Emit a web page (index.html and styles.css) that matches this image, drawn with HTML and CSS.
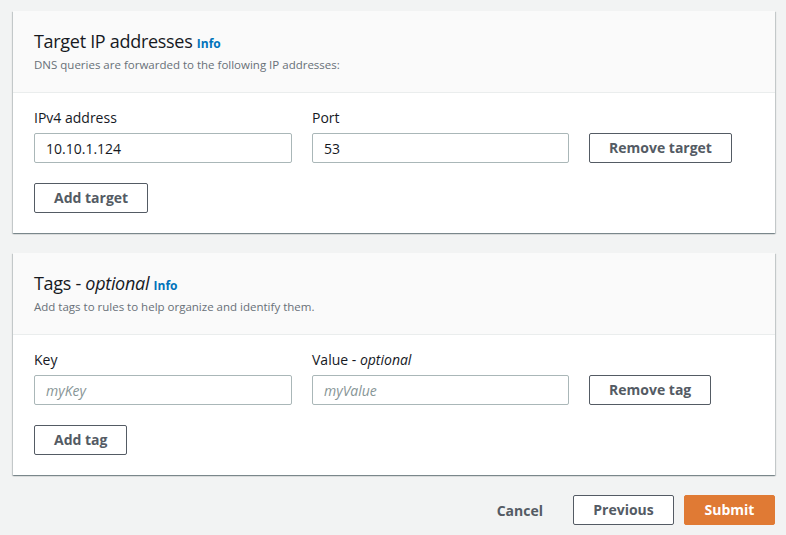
FILE: index.html
```html
<!DOCTYPE html>
<html>
<head>
<meta charset="utf-8">
<link rel="stylesheet" href="styles.css">
</head>
<body>
<div class="page">
  <section class="card">
    <div class="card-header">
      <h2 class="title">Target IP addresses <a class="info">Info</a></h2>
      <p class="desc">DNS queries are forwarded to the following IP addresses:</p>
    </div>
    <div class="card-body">
      <div class="row row-target">
        <div class="field">
          <label class="label">IPv4 address</label>
          <input class="input" type="text" value="10.10.1.124">
        </div>
        <div class="field">
          <label class="label">Port</label>
          <input class="input" type="text" value="53">
        </div>
        <div class="field-btn">
          <button class="btn">Remove target</button>
        </div>
      </div>
      <div class="add-row"><button class="btn">Add target</button></div>
    </div>
  </section>

  <section class="card">
    <div class="card-header">
      <h2 class="title">Tags - <i>optional</i> <a class="info">Info</a></h2>
      <p class="desc">Add tags to rules to help organize and identify them.</p>
    </div>
    <div class="card-body">
      <div class="row">
        <div class="field">
          <label class="label">Key</label>
          <input class="input" type="text" placeholder="myKey">
        </div>
        <div class="field">
          <label class="label">Value - <i>optional</i></label>
          <input class="input" type="text" placeholder="myValue">
        </div>
        <div class="field-btn">
          <button class="btn">Remove tag</button>
        </div>
      </div>
      <div class="add-row"><button class="btn">Add tag</button></div>
    </div>
  </section>

  <div class="footer">
    <button class="btn-link">Cancel</button>
    <button class="btn btn-prev">Previous</button>
    <button class="btn btn-primary">Submit</button>
  </div>
</div>
</body>
</html>
```

FILE: styles.css
```css
* { box-sizing: border-box; }
html, body {
  margin: 0;
  padding: 0;
  background: #f2f3f3;
  font-family: "Open Sans", "Noto Sans", sans-serif;
  color: #16191f;
}
.page {
  padding: 11px 11px 0 13px;
  display: flex;
  flex-direction: column;
  gap: 20px;
}
.card {
  background: #fff;
  box-shadow: 0 1px 1px 0 rgba(0,28,36,.3), 1px 1px 1px 0 rgba(0,28,36,.15), -1px 1px 1px 0 rgba(0,28,36,.15);
}
.card-header {
  background: #fafafa;
  border-bottom: 1px solid #eaeded;
  padding: 18px 20px 19px 21px;
}
.title {
  margin: 0;
  font-size: 18px;
  font-weight: 400;
  line-height: 24px;
  height: 24px;
  letter-spacing: -0.3px;
}
.title i { font-style: italic; }
.info {
  color: #0073bb;
  font-size: 12px;
  font-weight: 700;
  letter-spacing: 0;
  line-height: 1;
}
.desc {
  margin: 4px 0 0;
  font-size: 11.5px;
  line-height: 16px;
  color: #687078;
}
.card-body {
  padding: 14px 20px 20px 21px;
}
.row {
  display: grid;
  grid-template-columns: 258px 257px auto;
  column-gap: 20px;
  align-items: end;
}
.field { display: flex; flex-direction: column; gap: 4px; }
.label {
  font-size: 14px;
  line-height: 22px;
  height: 22px;
}
.input {
  height: 30px;
  border: 1px solid #aab7b8;
  border-radius: 2px;
  padding: 0 11px;
  font: inherit;
  font-size: 14px;
  color: #16191f;
  background: #fff;
  outline: none;
}
.input::placeholder { color: #879596; font-style: italic; }
.field-btn { display: flex; justify-self: start; }
.add-row { margin-top: 20px; display: flex; }
.btn {
  height: 30px;
  padding: 0 19px;
  border: 1px solid #545b64;
  border-radius: 2px;
  background: #fff;
  color: #545b64;
  font-family: inherit;
  font-size: 14px;
  font-weight: 700;
  line-height: 28px;
  cursor: pointer;
}
.footer {
  display: flex;
  justify-content: flex-end;
  align-items: center;
  gap: 10px;
}
.btn-link {
  background: none;
  border: none;
  color: #545b64;
  font-family: inherit;
  font-size: 14px;
  font-weight: 700;
  padding: 0 20px;
  height: 30px;
}
.btn-prev { width: 101px; padding: 0; }
.btn-primary {
  width: 91px;
  padding: 0;
  background: #e07a34;
  border-color: #e07a34;
  color: #fff;
}
```
